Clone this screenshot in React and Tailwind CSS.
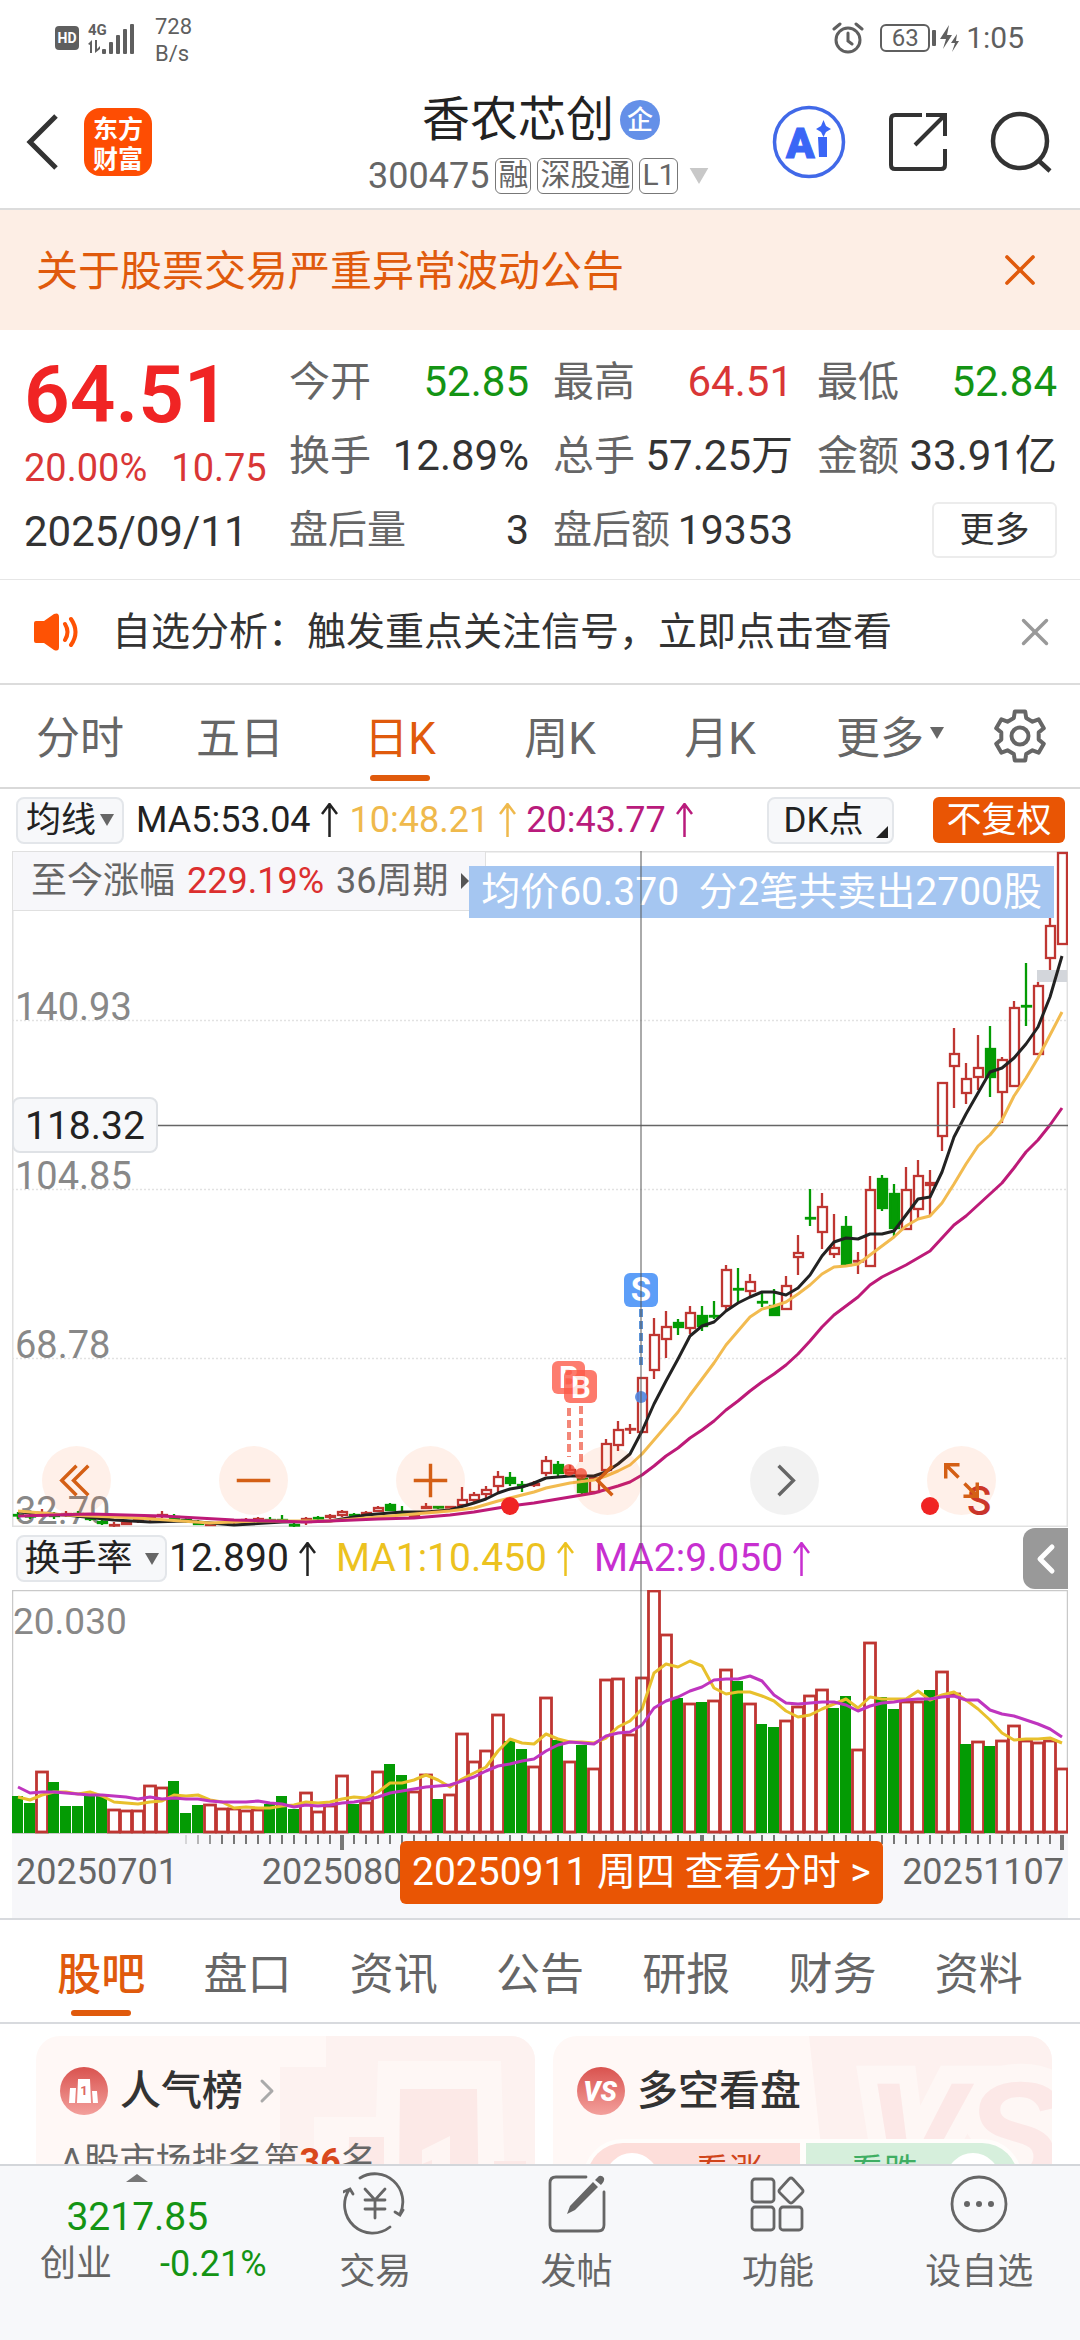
import React from 'react';
import { ChevronLeft, ChevronRight, X } from 'lucide-react';

const STEP = 12;
const UP = '#bf3632';
const DOWN = '#049b04';

// [high, bodyTop, bodyBottom, low, direction]
const CANDLES = [
  [661, 663, 665, 668, 'd'], [662, 664, 666, 668, 'd'], [658, 661, 664, 666, 'u'], [661, 663, 666, 668, 'd'],
  [660, 662, 665, 666, 'u'], [660, 662, 664, 667, 'd'], [664, 666, 669, 670, 'd'], [668, 670, 673, 674, 'd'],
  [671, 673, 674, 676, 'u'], [669, 671, 674, 674, 'u'], [666, 668, 671, 672, 'u'], [664, 666, 669, 670, 'u'],
  [660, 663, 666, 667, 'u'], [663, 665, 669, 670, 'd'], [666, 668, 670, 672, 'd'], [669, 671, 674, 674, 'd'],
  [671, 672, 675, 675, 'u'], [670, 671, 673, 674, 'u'], [668, 669, 672, 673, 'u'], [667, 668, 671, 671, 'u'],
  [666, 667, 670, 670, 'u'], [666, 668, 670, 671, 'd'], [664, 668, 670, 672, 'd'], [670, 673, 674, 676, 'd'],
  [666, 667, 672, 674, 'u'], [665, 666, 668, 669, 'd'], [663, 664, 667, 668, 'u'], [659, 660, 665, 666, 'u'],
  [662, 663, 664, 665, 'd'], [660, 661, 664, 664, 'u'], [655, 656, 661, 661, 'u'], [652, 653, 660, 660, 'd'],
  [655, 662, 663, 664, 'd'], [663, 664, 666, 666, 'u'], [652, 655, 658, 658, 'u'], [655, 655, 657, 658, 'd'],
  [655, 655, 657, 657, 'u'], [636, 648, 655, 655, 'u'], [641, 643, 650, 652, 'u'], [635, 638, 644, 648, 'u'],
  [620, 625, 636, 641, 'u'], [621, 626, 633, 635, 'd'], [630, 633, 634, 641, 'd'], [630, 632, 635, 636, 'u'],
  [605, 609, 623, 625, 'u'], [610, 613, 623, 625, 'd'], [614, 618, 623, 623, 'u'], [624, 627, 642, 643, 'd'],
  [625, 626, 642, 642, 'u'], [588, 592, 620, 624, 'u'], [570, 578, 595, 600, 'u'], [573, 577, 579, 583, 'u'],
  [526, 526, 582, 582, 'u'], [467, 483, 520, 528, 'u'], [460, 475, 489, 507, 'u'], [468, 471, 477, 484, 'd'],
  [455, 461, 478, 483, 'u'], [455, 464, 476, 480, 'd'], [450, 464, 465, 468, 'd'], [414, 418, 456, 460, 'u'],
  [417, 437, 438, 451, 'd'], [423, 430, 441, 446, 'u'], [442, 450, 451, 456, 'd'], [438, 454, 465, 465, 'd'],
  [425, 434, 459, 459, 'u'], [384, 401, 407, 424, 'u'], [338, 366, 368, 375, 'd'], [342, 355, 382, 398, 'u'],
  [363, 396, 404, 407, 'u'], [365, 375, 415, 415, 'd'], [401, 409, 411, 423, 'u'], [325, 338, 416, 416, 'u'],
  [324, 327, 358, 360, 'd'], [333, 342, 378, 386, 'd'], [316, 338, 379, 379, 'u'], [309, 324, 359, 368, 'u'],
  [319, 331, 335, 365, 'u'], [231, 231, 286, 300, 'u'], [177, 202, 216, 257, 'u'], [212, 227, 243, 253, 'u'],
  [184, 216, 227, 239, 'u'], [175, 197, 227, 246, 'd'], [206, 208, 242, 272, 'u'], [150, 156, 236, 236, 'u'],
  [112, 154, 156, 175, 'd'], [131, 134, 204, 204, 'u'], [66, 74, 108, 119, 'u'], [1, 1, 94, 94, 'u'],
];

// [bar index, y]
const MA5 = [
  [0, 661], [4, 664], [8, 669], [11, 671], [14, 670], [18, 674], [22, 671], [26, 670], [29, 664], [32, 661],
  [34, 661], [36, 659], [38, 652], [39, 648], [40, 642], [41, 638], [42, 636], [43, 632], [44, 627], [45, 626],
  [46, 625], [48, 625], [49, 621], [50, 613], [51, 603], [52, 580], [53, 553], [54, 530], [55, 508], [56, 485],
  [57, 475], [58, 471], [59, 460], [60, 452], [61, 446], [62, 441], [63, 441], [64, 444], [65, 437], [66, 424],
  [67, 405], [68, 391], [69, 387], [70, 388], [71, 383], [72, 383], [73, 380], [74, 364], [75, 348], [76, 346],
  [77, 321], [78, 286], [79, 263], [80, 242], [81, 221], [82, 217], [83, 207], [84, 193], [85, 176], [86, 146], [87, 105],
];
const MA10 = [
  [0, 660], [4, 664], [10, 667], [16, 672], [20, 670], [26, 670], [30, 666], [34, 662], [36, 660], [38, 657],
  [40, 650], [41, 647], [42, 644], [43, 641], [44, 637], [46, 632], [48, 629], [49, 625], [50, 620], [51, 614],
  [52, 603], [53, 589], [54, 575], [55, 561], [56, 544], [57, 528], [58, 512], [59, 494], [60, 480], [61, 466],
  [62, 458], [63, 455], [64, 451], [65, 443], [66, 434], [67, 423], [68, 416], [69, 415], [70, 413], [71, 404],
  [72, 395], [73, 386], [74, 375], [75, 368], [76, 365], [77, 352], [78, 333], [79, 313], [80, 295], [81, 284],
  [82, 269], [83, 245], [84, 227], [85, 207], [86, 184], [87, 161],
];
const MA20 = [
  [0, 665], [6, 663], [12, 665], [18, 669], [24, 671], [30, 668], [33, 667], [36, 664], [38, 661], [40, 657],
  [41, 655], [43, 652], [44, 650], [46, 646], [48, 642], [50, 635], [51, 631], [52, 624], [53, 615], [54, 605],
  [55, 597], [56, 587], [57, 579], [58, 570], [59, 559], [60, 550], [61, 540], [62, 531], [63, 523], [64, 514],
  [65, 503], [66, 490], [67, 476], [68, 464], [69, 455], [70, 446], [71, 434], [72, 426], [73, 420], [74, 414],
  [75, 407], [76, 400], [77, 387], [78, 374], [79, 365], [80, 354], [81, 343], [82, 332], [83, 317], [84, 301],
  [85, 289], [86, 274], [87, 257],
];

// bar heights, "d" marks a falling day
const VOLUMES = `37d 30d 62 51d 27d 27d 37d 39d 24 23 23 48 46 52d 20d 28d 29 25 25 23 24 29d 37d 24d 41 22 28 58 29d 31
62 69d 58d 42 59 34d 39 100 72 83 119 92d 84d 67 136 93d 72 88d 65 154 155 99 156 243 199 135d 130 131d 133 164
152d 130 109d 106d 113 127 138 144 125d 137d 84 191 136d 124d 132 132 143d 162 140 89d 92 87d 93 108 93 91 93 65`
  .split(/\s+/)
  .map((v) => ({ h: parseInt(v, 10), down: v.endsWith('d') }));

const VOL_MA1 = [
  36, 33, 38, 41, 41, 39, 41, 37, 31, 30, 29, 31, 32, 38, 37, 38, 33, 31, 25, 26, 25, 25, 27, 28, 31, 30, 31, 34, 36, 35,
  41, 50, 50, 53, 58, 53, 46, 54, 60, 66, 82, 94, 90, 89, 99, 94, 91, 91, 90, 95, 106, 112, 124, 160, 169, 166, 172, 167,
  145, 139, 141, 141, 137, 132, 122, 116, 118, 124, 129, 134, 125, 136, 134, 134, 134, 142, 133, 138, 141, 133, 124, 113,
  100, 93, 94, 94, 95, 90,
];
const VOL_MA2 = [
  46, 40, 41, 41, 40, 39, 38, 38, 37, 36, 34, 36, 34, 35, 34, 34, 32, 31, 31, 31, 32, 30, 29, 26, 28, 27, 28, 30, 31, 33,
  36, 40, 42, 44, 46, 47, 48, 52, 56, 62, 67, 69, 72, 74, 82, 88, 91, 90, 89, 97, 100, 101, 108, 125, 132, 136, 142, 146,
  153, 154, 154, 157, 152, 138, 130, 129, 130, 131, 131, 128, 122, 127, 130, 131, 133, 134, 134, 136, 137, 133, 133, 123,
  119, 117, 113, 109, 104, 96,
];

const toPoints = (pts) => pts.map(([i, y]) => `${6 + i * STEP},${y}`).join(' ');
const volPoints = (vals) => vals.map((v, i) => `${6 + i * STEP},${243 - v}`).join(' ');

const GEAR = Array.from({ length: 6 })
  .flatMap((_, k) => [[-19, 19], [-12, 25], [12, 25], [19, 19]].map(([da, r]) => {
    const a = ((k * 60 - 90 + da) * Math.PI) / 180;
    return `${(27 + r * Math.cos(a)).toFixed(1)},${(27 + r * Math.sin(a)).toFixed(1)}`;
  }))
  .join(' ');

const Caret = ({ className }) => (
  <svg viewBox="0 0 14 12" className={className} aria-hidden="true"><path d="M0 0H14L7 12Z" fill="currentColor" /></svg>
);

const UpArrow = () => (
  <svg viewBox="0 0 17 34" className="w-[17px] h-[34px] ml-2.5" fill="none" stroke="currentColor" strokeWidth="2.5" aria-hidden="true">
    <path d="M8.500 34V1M1 11L8.500 1L16 11" />
  </svg>
);

const StatusBar = () => (
  <div className="h-[75px] pl-[55px] pr-14 flex items-center justify-between text-[#5f5f5f]">
    <div className="flex items-center">
      <span className="w-6 h-6 rounded-sm bg-[#5f5f5f] text-white text-[14px] leading-6 font-bold text-center">HD</span>
      <svg viewBox="0 0 54 36" className="w-[54px] h-9 ml-2" fill="currentColor" aria-hidden="true">
        <text x="1" y="15" fontSize="15" fontWeight="700">4G</text>
        <path d="M1 24L5 20V33H3V25ZM8 20H10V29L13 26V29L8 33Z" />
        <rect x="15" y="29" width="4" height="5" rx="1" />
        <rect x="22" y="22" width="4" height="12" rx="1" />
        <rect x="29" y="15" width="4" height="19" rx="1" />
        <rect x="36" y="9" width="4" height="25" rx="1" />
        <rect x="43" y="4" width="4" height="30" rx="1" />
      </svg>
      <div className="ml-3.5 pt-1 text-[22px] leading-[27px]"><div>728</div><div>B/s</div></div>
    </div>
    <div className="flex items-center">
      <svg viewBox="0 0 32 32" className="w-8 h-8" fill="none" stroke="currentColor" strokeWidth="3" strokeLinecap="round" aria-hidden="true">
        <circle cx="16" cy="18" r="12" /><path d="M16 11V19L20 22M2 7L8 2M24 2L30 7" />
      </svg>
      <span className="ml-4 w-[50px] h-[28px] rounded-md border-2 border-current text-2xl leading-6 text-center">63</span>
      <svg viewBox="0 0 28 30" className="w-7 h-[30px] ml-0.5" fill="currentColor" aria-hidden="true">
        <rect x="0" y="7" width="4" height="16" rx="1" />
        <path d="M17 2L8 16H14L11 26L20 12H15ZM25 11L19 20H23L20 29L27 18H24Z" />
      </svg>
      <span className="ml-1.5 text-[30px] leading-none">1:05</span>
    </div>
  </div>
);

const Header = () => (
  <header className="relative h-[135px] border-b-2 border-[#dcdcdc] flex items-center justify-between pl-6 pr-7">
    <div className="flex items-center">
      <button aria-label="返回" className="w-[60px]">
        <svg viewBox="0 0 36 58" className="w-9 h-[58px]" fill="none" stroke="#333" strokeWidth="5"><path d="M32 3L6 29L32 55" /></svg>
      </button>
      <svg viewBox="0 0 68 68" className="w-[68px] h-[68px]" role="img" aria-label="东方财富">
        <rect width="68" height="68" rx="16" fill="#fe4d03" />
        <g fill="#fff" fontSize="25" fontWeight="700" textAnchor="middle"><text x="34" y="30">东方</text><text x="34" y="60">财富</text></g>
      </svg>
    </div>
    <div className="absolute left-[368px] top-4 flex flex-col">
      <h1 className="pl-[54px] flex items-center text-[48px] leading-[58px] text-[#222]">
        香农芯创
        <span className="ml-1.5 w-10 h-10 rounded-full bg-[#6490e8] text-white text-[26px] leading-10 text-center font-medium">企</span>
      </h1>
      <div className="mt-1.5 flex items-center gap-1.5 text-[36px] leading-[42px] text-[#666]">
        300475
        {['融', '深股通', 'L1'].map((t) => (
          <span key={t} className="h-9 px-0.5 rounded-md border border-[#777] text-[30px] leading-8">{t}</span>
        ))}
        <Caret className="w-[22px] h-4 ml-1 text-[#c8c8c8]" />
      </div>
    </div>
    <div className="flex items-center gap-[42px]">
      <button aria-label="Ai">
        <svg viewBox="0 0 74 74" className="w-[74px] h-[74px]">
          <circle cx="37" cy="37" r="34.5" fill="none" stroke="#4169e8" strokeWidth="3.5" />
          <text x="14" y="53" fontSize="42" fontWeight="900" fill="#3a66f6" stroke="#3a66f6">A</text>
          <path d="M46 32H55V52H47ZM51.500 15L54 21L59 24L54 27L51.500 32L49 27L44 24L49 21Z" fill="#3a66f6" />
        </svg>
      </button>
      <button aria-label="分享">
        <svg viewBox="0 0 60 60" className="w-[60px] h-[60px]" fill="none" stroke="#333" strokeWidth="4">
          <path d="M34 3H7Q3 3 3 7V53Q3 57 7 57H53Q57 57 57 53V37M38 3H57V24M56 4L27 33" />
        </svg>
      </button>
      <button aria-label="搜索">
        <svg viewBox="0 0 62 62" className="w-[62px] h-[62px]" fill="none" stroke="#333" strokeWidth="4.500">
          <circle cx="30" cy="30" r="27" /><path d="M48 49L60 60" />
        </svg>
      </button>
    </div>
  </header>
);

const Stat = ({ label, value, tone = 'text-[#333]', small }) => (
  <div className="flex justify-between whitespace-nowrap">
    <dt className={small ? 'text-[39px] text-[#666]' : 'text-[#666]'}>{label}</dt>
    <dd className={small ? tone : `text-[42px] ${tone}`}>{value}</dd>
  </div>
);

const Quote = () => (
  <section className="h-[250px] pl-6 pr-[23px] py-[15px] flex border-b border-[#e6e6e6]">
    <div className="w-[265px]">
      <div className="pt-1 text-[80px] leading-[92px] font-semibold text-[#f02424]">64.51</div>
      <div className="flex gap-6 text-[38px] leading-[54px] text-[#d93636]"><span>20.00%</span><span>10.75</span></div>
      <div className="text-[42px] leading-[74px] text-[#333]">2025/09/11</div>
    </div>
    <dl className="flex-1 grid grid-cols-3 gap-x-6 text-[41px] leading-[74px]">
      <Stat label="今开" value="52.85" tone="text-[#149414]" />
      <Stat label="最高" value="64.51" tone="text-[#d93636]" />
      <Stat label="最低" value="52.84" tone="text-[#149414]" />
      <Stat label="换手" value="12.89%" />
      <Stat label="总手" value="57.25万" />
      <Stat label="金额" value="33.91亿" />
      <Stat label="盘后量" value="3" small />
      <Stat label="盘后额" value="19353" small />
      <div className="flex justify-end items-center">
        <button className="w-[125px] h-14 rounded-md border-2 border-[#ececec] text-[35px] leading-none text-[#333]">更多</button>
      </div>
    </dl>
  </section>
);

const PERIODS = ['分时', '五日', '日K', '周K', '月K', '更多'];

const PeriodTabs = () => (
  <nav className="h-[104px] grid grid-cols-[repeat(6,4fr)_3fr] border-b-2 border-[#d9d9d9] text-[44px] leading-none text-[#666]">
    {PERIODS.map((p) => (
      <button key={p} className={p === '日K' ? 'relative pt-1.5 text-[#e05a0c]' : 'relative pt-1.5'}>
        {p}
        {p === '更多' && <Caret className="absolute right-4 top-[42px] w-3.5 h-3" />}
        {p === '日K' && <span className="absolute left-1/2 -ml-[30px] bottom-1.5 w-[60px] h-1.5 rounded-full bg-[#e05a0c]" />}
      </button>
    ))}
    <button aria-label="设置" className="flex items-center justify-center">
      <svg viewBox="0 0 54 54" className="w-[54px] h-[54px]" fill="none" stroke="#666" strokeWidth="4" strokeLinejoin="round">
        <polygon points={GEAR} /><circle cx="27" cy="27" r="8.500" />
      </svg>
    </button>
  </nav>
);

const PriceChart = () => (
  <svg viewBox="0 0 1056 676" className="block w-full h-auto" role="img" aria-label="日K线图">
    <path d="M0 169.500H1056M0 338.500H1056M0 507.500H1056" stroke="#e2e2e2" strokeWidth="1.500" strokeDasharray="2 2" />
    <rect x="0.500" y="0.500" width="1055" height="675" fill="none" stroke="#e0e0e0" strokeWidth="2" />
    <g fill="#888" fontSize="38">
      <text x="3" y="169">140.93</text><text x="3" y="338">104.85</text><text x="3" y="507">68.78</text><text x="3" y="673">32.70</text>
    </g>
    <rect x="1025" y="119" width="30" height="12" fill="#d3d6db" />
    {CANDLES.map(([hi, top, bot, lo, dir], i) => {
      const x = 6 + i * STEP;
      const up = dir === 'u';
      const h = Math.max(bot - top, 1);
      return (
        <g key={i} stroke={up ? UP : DOWN} strokeWidth="2.300">
          <path d={`M${x} ${hi}V${top}M${x} ${bot}V${lo}`} />
          <rect x={x - 4} y={top + 1} width="9" height={Math.max(h - 2, 0.5)} fill={up ? '#fff' : DOWN} />
        </g>
      );
    })}
    <g fill="none" strokeWidth="3" strokeLinejoin="round">
      <polyline points={toPoints(MA5)} stroke="#222" />
      <polyline points={toPoints(MA10)} stroke="#f2bb50" />
      <polyline points={toPoints(MA20)} stroke="#bd1a78" />
    </g>
    <path d="M145 274.500H1056" stroke="#666" strokeWidth="1.500" />
    <rect x="1" y="247" width="144" height="54" rx="7" fill="#f7f8fa" stroke="#dfe2e6" strokeWidth="2" />
    <text x="13" y="288" fontSize="39" fill="#222">118.32</text>
    <circle cx="498" cy="655" r="9" fill="#f02424" />
    <circle cx="918" cy="655" r="9" fill="#f02424" />
    <g opacity="0.75">
      <g stroke="#ef5f4c" strokeWidth="4" strokeDasharray="8 4"><path d="M557 557V606M569 555V615" /></g>
      <circle cx="557" cy="619" r="6" fill="#f0402c" /><circle cx="569" cy="623" r="6" fill="#f0402c" />
      <rect x="540" y="510" width="33" height="33" rx="6" fill="#fd5240" />
      <text x="557" y="537" fontSize="31" fontWeight="700" fill="#fff" textAnchor="middle">B</text>
    </g>
    <g opacity="0.8">
      <rect x="552" y="519" width="33" height="33" rx="6" fill="#fd5a48" />
      <text x="569" y="547" fontSize="31" fontWeight="700" fill="#fff" textAnchor="middle">B</text>
    </g>
    <path d="M629 458V514" stroke="#5b93d8" strokeWidth="4" strokeDasharray="8 4" />
    <circle cx="629" cy="546" r="6" fill="#4f86e0" opacity="0.9" />
    <rect x="612" y="422" width="34" height="34" rx="6" fill="#5d9ef8" />
    <text x="629" y="450" fontSize="33" fontWeight="700" fill="#fff" textAnchor="middle">S</text>
    <text x="955" y="664" fontSize="40" fontWeight="500" fill="#c8342c">S</text>
  </svg>
);

const CHART_BUTTONS = [
  { label: '最左', d: 'M35 20L20 35L35 50M47 20L32 35L47 50' },
  { label: '缩小', d: 'M18 35H52' },
  { label: '放大', d: 'M18 35H52M35 18V52' },
  { label: '上一个', d: 'M40 20L25 35L40 50' },
  { label: '下一个', d: 'M29 20L44 35L29 50', gray: true },
  { label: '全屏', d: 'M19 33V19H33M20 20L32 32M38 38L50 50M51 37V51H37' },
];

const VolumeChart = () => (
  <svg viewBox="0 0 1056 244" className="block w-full h-auto" role="img" aria-label="换手率图">
    <rect x="0.500" y="0.500" width="1055" height="243" fill="#fff" stroke="#c9c9c9" strokeWidth="1.500" />
    <text x="1" y="44" fontSize="37" fill="#888">20.030</text>
    {VOLUMES.map(({ h, down }, i) => (down
      ? <rect key={i} x={i * STEP} y={243 - h} width="11" height={h} fill={DOWN} />
      : <rect key={i} x={i * STEP + 0.5} y={244 - h} width="11" height={h - 2} fill="#fff" stroke={UP} strokeWidth="2.800" />
    ))}
    <g fill="none" strokeWidth="3" strokeLinejoin="round">
      <polyline points={volPoints(VOL_MA1)} stroke="#e8c02c" />
      <polyline points={volPoints(VOL_MA2)} stroke="#bf35bf" />
    </g>
  </svg>
);

const DateAxis = () => (
  <div className="relative h-[84px] bg-[#f7f7fa] text-[36px] leading-[44px] text-[#666]">
    <svg viewBox="0 0 1056 16" className="block w-full h-auto" aria-hidden="true">
      {Array.from({ length: 74 }, (_, k) => k + 14).map((i) => {
        const major = i === 27 || i === 57 || i === 87;
        return <path key={i} d={`M${6 + i * STEP} 1V${major ? 16 : 10}`} stroke="#777" strokeWidth={major ? 4 : 2} opacity={Math.min(1, (i - 13) / 4)} />;
      })}
    </svg>
    <div className="flex px-1">
      <span>20250701</span>
      <span className="ml-[84px]">20250801</span>
      <span className="ml-auto">20251107</span>
    </div>
    <button className="absolute left-[388px] top-[7px] h-[63px] px-3 rounded-md bg-[#e95504] text-[39px] leading-none text-white whitespace-nowrap">
      20250911 周四 查看分时 &gt;
    </button>
  </div>
);

const Charts = () => (
  <section className="mx-3">
    <div className="h-[62px] flex items-center text-[36px] leading-none whitespace-nowrap">
      <button className="ml-1 w-[108px] h-[47px] rounded-lg border-2 border-[#e3e6ea] bg-[#f7f8fa] flex items-center justify-center gap-1 text-[35px] text-[#222]">
        均线<Caret className="w-3.5 h-3 text-[#666]" />
      </button>
      <span className="ml-3 flex items-center text-[#222]">MA5:53.04<UpArrow /></span>
      <span className="ml-3 flex items-center text-[#efb94c]">10:48.21<UpArrow /></span>
      <span className="ml-2.5 flex items-center text-[#b91b7c]">20:43.77<UpArrow /></span>
      <button className="relative ml-auto w-[127px] h-[47px] rounded-lg border-2 border-[#e3e6ea] bg-[#f7f8fa] pr-3.5 text-[35px] leading-none text-[#222]">
        DK点
        <svg viewBox="0 0 12 12" className="absolute right-1 bottom-1 w-3 h-3"><path d="M12 0V12H0Z" fill="#222" /></svg>
      </button>
      <button className="ml-[39px] mr-[3px] w-[132px] h-[46px] rounded-md bg-[#e95504] text-[35px] leading-none text-white">不复权</button>
    </div>

    <div className="relative">
      <div className="relative">
        <PriceChart />
        <button className="absolute left-0 top-0 w-[474px] h-[60px] pl-[18px] border border-[#e0e0e0] bg-[#f7f7fa] flex items-center text-[36px] leading-none text-[#666] whitespace-nowrap">
          至今涨幅<span className="mx-3 text-[#dc2f2f]">229.19%</span>36周期
          <svg viewBox="0 0 8 16" className="ml-3 w-2 h-4"><path d="M0 0L8 8L0 16Z" fill="#555" /></svg>
        </button>
        <div className="absolute right-[14px] top-[15px] h-[52px] px-3 bg-[#a5c6f1] text-[39px] leading-[53px] text-white whitespace-pre">均价60.370  分2笔共卖出2700股</div>
        <div className="absolute left-[30px] right-[72px] bottom-3 flex justify-between">
          {CHART_BUTTONS.map(({ label, d, gray }) => (
            <button key={label} aria-label={label} className={gray ? 'rounded-full bg-black/5 text-[#666]' : 'rounded-full bg-[#ff5a10]/9 text-[#d45f15]'}>
              <svg viewBox="0 0 70 70" className="w-[69px] h-[69px]" fill="none" stroke="currentColor" strokeWidth="3.500"><path d={d} /></svg>
            </button>
          ))}
        </div>
      </div>

      <div className="h-[63px] flex items-center text-[39px] leading-none whitespace-nowrap">
        <button className="ml-1 w-[151px] h-[47px] rounded-lg border-2 border-[#e3e6ea] bg-[#f7f8fa] flex items-center justify-center gap-3 text-[36px] text-[#222]">
          换手率<Caret className="w-3.5 h-3 text-[#666]" />
        </button>
        <span className="ml-0.5 flex items-center text-[#222]">12.890<UpArrow /></span>
        <span className="ml-5 flex items-center text-[#ecc21f]">MA1:10.450<UpArrow /></span>
        <span className="ml-5 flex items-center text-[#c72fd0]">MA2:9.050<UpArrow /></span>
        <button aria-label="展开" className="ml-auto w-[45px] h-[61px] rounded-l-xl bg-[#999] text-white flex items-center justify-center">
          <ChevronLeft size={48} strokeWidth={2.5} className="shrink-0" />
        </button>
      </div>
      <VolumeChart />
      <div className="absolute left-[59.5%] top-0 bottom-0 w-0.5 bg-[#555]/50" />
    </div>
    <DateAxis />
  </section>
);

const SECTIONS = ['股吧', '盘口', '资讯', '公告', '研报', '财务', '资料'];

const SectionTabs = () => (
  <nav className="h-[106px] px-7 grid grid-cols-7 border-y-2 border-[#d8dade] text-[44px] leading-none text-[#666]">
    {SECTIONS.map((s, i) => (
      <button key={s} className={i === 0 ? 'relative pt-2 font-medium text-[#e05a0c]' : 'relative pt-2'}>
        {s}
        {i === 0 && <span className="absolute left-1/2 -ml-[30px] bottom-1.5 w-[60px] h-1.5 rounded-full bg-[#e05a0c]" />}
      </button>
    ))}
  </nav>
);

const Cards = () => (
  <section className="px-9 pt-3 pr-7 grid grid-cols-2 gap-[18px]">
    <article className="relative h-[240px] rounded-3xl overflow-hidden bg-[#fff8f6] px-6 pt-[30px]">
      <svg viewBox="0 0 499 240" className="absolute inset-0 w-full h-full" aria-hidden="true">
        <path d="M290 0H499V240H244V31H290Z" fill="#fdf2f0" />
        <path d="M342 25H465L472 240H278V81H340Z" fill="#fef7f5" />
        <path d="M313 101H348V240H311Z M364 53H441L444 240H362Z M458 125H490V240H458Z" fill="#fce9e7" />
        <path d="M386 114L414 100V240H396V124L386 128Z" fill="#fef5f3" />
      </svg>
      <h2 className="relative flex items-center text-[41px] leading-[50px] font-medium text-[#333]">
        <svg viewBox="0 0 48 48" className="w-12 h-12 mr-3" aria-hidden="true">
          <defs><linearGradient id="badge" x1="0" y1="0" x2="0" y2="1"><stop offset="0" stopColor="#d9534f" /><stop offset="1" stopColor="#f3a09c" /></linearGradient></defs>
          <circle cx="24" cy="24" r="24" fill="url(#badge)" />
          <path d="M10 21H16L15 36H9ZM18 12H30L31 36H17ZM32 24H37L38 36H33Z" fill="#fff" />
          <text x="24" y="28" fontSize="13" fontWeight="700" fill="#dd6864" textAnchor="middle">1</text>
        </svg>
        人气榜<ChevronRight size={40} strokeWidth={1.8} className="ml-1 text-[#aaa]" />
      </h2>
      <p className="relative mt-[22px] text-[36px] leading-[48px] text-[#666]">A股市场排名第<b className="text-[#d9481c]">36</b>名</p>
    </article>
    <article className="relative h-[240px] rounded-3xl overflow-hidden bg-[#fff8f6] px-6 pt-[30px]">
      <svg viewBox="0 0 499 240" className="absolute inset-0 w-full h-full" aria-hidden="true">
        <path d="M256 0H499V240H282Z" fill="#fdf1ef" />
        <text x="312" y="150" fontSize="148" fontWeight="700" fontStyle="italic" fontFamily="Liberation Sans" fill="#fce8e7" stroke="#fef7f5" strokeWidth="36" paintOrder="stroke">VS</text>
      </svg>
      <h2 className="relative flex items-center text-[41px] leading-[50px] font-medium text-[#333]">
        <svg viewBox="0 0 48 48" className="w-12 h-12 mr-3" aria-hidden="true">
          <circle cx="24" cy="24" r="24" fill="url(#badge)" />
          <text x="23" y="34" fontSize="27" fontWeight="900" fontStyle="italic" fill="#fff" textAnchor="middle">VS</text>
        </svg>
        多空看盘
      </h2>
      <div className="relative mt-[23px] mx-1.5 h-20 rounded-full border-4 border-[#fffdfb] overflow-hidden flex gap-1.5 bg-[#fffdfb] text-[34px] leading-9">
        <button className="flex-1 flex items-start gap-9 pl-[18px] pt-2.5 bg-[#fddeda] text-[#d0451b]"><i className="w-[54px] h-[54px] rounded-full bg-white" />看涨</button>
        <button className="flex-1 flex items-start justify-end gap-7 pr-[18px] pt-2.5 bg-[#d6efdc] text-[#3fae63]">看跌<i className="w-[54px] h-[54px] rounded-full bg-white" /></button>
      </div>
    </article>
  </section>
);

const ACTIONS = [
  { label: '交易', icon: (<><path d="M17 6A28 28 0 0 1 57 42M60 38L57 43L52 40M47 55A28 28 0 0 1 6 18M0 20L7 17L10 22" /><path d="M22 17L32 28L42 17M32 28V46M22 28H42M22 37H42" /></>) },
  { label: '发帖', icon: (<><path d="M41 5H11Q5 5 5 11V53Q5 59 11 59H53Q59 59 59 53V20" /><path d="M22 42L25 34L48 10L53 15L30 38ZM50 8L54 4Q57 3 59 6Q60 9 56 13Z" fill="currentColor" stroke="none" /></>) },
  { label: '功能', icon: (<><rect x="6" y="7" width="22" height="23" rx="3" /><rect x="6" y="35" width="22" height="23" rx="3" /><rect x="34" y="35" width="22" height="23" rx="3" /><path d="M43 7Q45 5 47 7L56 17Q58 19 56 21L47 30Q45 32 43 30L34 21Q32 19 34 17Z" /></>) },
  { label: '设自选', icon: (<><circle cx="32" cy="32" r="27" /><g fill="currentColor" stroke="none"><circle cx="20" cy="32" r="3" /><circle cx="32" cy="32" r="3" /><circle cx="44" cy="32" r="3" /></g></>) },
];

const BottomBar = () => (
  <footer className="relative h-[176px] shrink-0 grid grid-cols-[15fr_11fr_11fr_11fr_11fr] border-t-2 border-[#d3d6da] bg-[#f7f8fa] text-[36px] leading-[44px] text-[#666]">
    <button className="pt-2 flex flex-col items-center whitespace-nowrap">
      <svg viewBox="0 0 22 8" className="w-[22px] h-2"><path d="M0 8L11 0L22 8Z" fill="#777" /></svg>
      <span className="mt-2.5 text-[39px] leading-[50px] text-[#149414]">3217.85</span>
      <span className="flex gap-12 pl-8">创业<span className="text-[#149414]">-0.21%</span></span>
    </button>
    {ACTIONS.map(({ label, icon }) => (
      <button key={label} className="pt-1.5 flex flex-col items-center gap-3.5">
        <svg viewBox="0 0 64 64" className="w-16 h-16" fill="none" stroke="currentColor" strokeWidth="2.800" strokeLinecap="round" aria-hidden="true">{icon}</svg>
        {label}
      </button>
    ))}
  </footer>
);

export default function App() {
  return (
    <div className="h-screen flex flex-col bg-white overflow-hidden font-['Roboto','Noto_Sans_CJK_SC',sans-serif]">
      <main className="flex-1 min-h-0 overflow-hidden">
        <StatusBar />
        <Header />
        <div className="h-[120px] pl-9 pr-[34px] bg-[#fdeee5] flex items-center justify-between text-[42px] leading-none text-[#e05a0c]">
          <a href="#notice" className="pt-1">关于股票交易严重异常波动公告</a>
          <button aria-label="关闭公告"><X size={52} strokeWidth={1.7} /></button>
        </div>
        <Quote />
        <div className="h-[105px] pl-8 pr-[22px] flex items-center border-b-2 border-[#dcdcdc] text-[39px] leading-none text-[#333]">
          <svg viewBox="0 0 46 38" className="w-[46px] h-[38px] mr-[34px]" aria-hidden="true">
            <path d="M2 10Q2 8 4 8H12L22 1Q27 -1 27 4V34Q27 39 22 37L12 30H4Q2 30 2 28Z" fill="#fe5204" />
            <path d="M33 11Q38 19 33 27M39 6Q48 19 39 32" fill="none" stroke="#fe5204" strokeWidth="4" strokeLinecap="round" />
          </svg>
          <a href="#signal" className="pt-0.5">自选分析：触发重点关注信号，立即点击查看</a>
          <button aria-label="关闭提示" className="ml-auto text-[#999]"><X size={46} strokeWidth={1.8} /></button>
        </div>
        <PeriodTabs />
        <Charts />
        <SectionTabs />
        <Cards />
      </main>
      <BottomBar />
    </div>
  );
}
